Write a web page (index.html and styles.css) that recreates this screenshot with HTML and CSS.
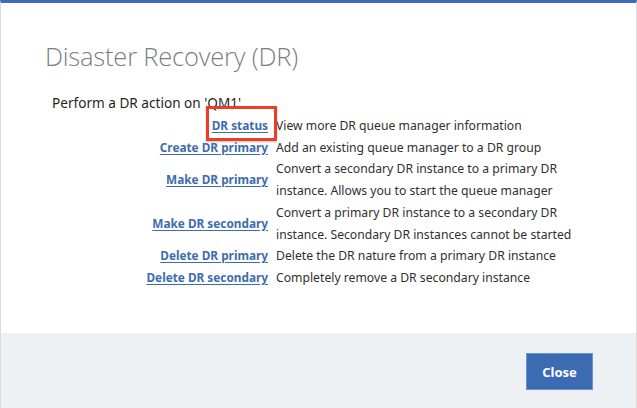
FILE: index.html
```html
<!DOCTYPE html>
<html lang="en">
<head>
<meta charset="utf-8">
<title>Disaster Recovery (DR)</title>
<link rel="stylesheet" href="styles.css">
</head>
<body>
<div class="modal">
  <div class="modal-body">
    <h1 class="modal-title">Disaster Recovery (DR)</h1>
    <p class="intro">Perform a DR action on 'QM1'</p>
    <div class="actions">
      <div class="action-label"><a href="#" class="action-link highlighted">DR status</a></div>
      <div class="action-desc">View more DR queue manager information</div>

      <div class="action-label"><a href="#" class="action-link">Create DR primary</a></div>
      <div class="action-desc">Add an existing queue manager to a DR group</div>

      <div class="action-label"><a href="#" class="action-link">Make DR primary</a></div>
      <div class="action-desc">Convert a secondary DR instance to a primary DR<br>instance. Allows you to start the queue manager</div>

      <div class="action-label"><a href="#" class="action-link">Make DR secondary</a></div>
      <div class="action-desc">Convert a primary DR instance to a secondary DR<br>instance. Secondary DR instances cannot be started</div>

      <div class="action-label"><a href="#" class="action-link">Delete DR primary</a></div>
      <div class="action-desc">Delete the DR nature from a primary DR instance</div>

      <div class="action-label"><a href="#" class="action-link">Delete DR secondary</a></div>
      <div class="action-desc">Completely remove a DR secondary instance</div>
    </div>
  </div>
  <div class="modal-footer">
    <button class="btn-primary" type="button">Close</button>
  </div>
</div>
</body>
</html>
```

FILE: styles.css
```css
html, body {
  margin: 0;
  padding: 0;
  height: 100%;
  background: #ffffff;
}

body {
  font-family: "Noto Sans", "Open Sans", sans-serif;
  color: #2b2b2b;
}

.modal {
  box-sizing: border-box;
  height: 408px;
  display: flex;
  flex-direction: column;
  border-top: 3px solid #3c6db4;
  border-left: 1px solid #dcdcdc;
  border-right: 1px solid #dcdcdc;
}

.modal-body {
  flex: 1;
  padding: 37px 0 0 44px;
}

.modal-title {
  margin: 0;
  font-family: "Open Sans", sans-serif;
  font-weight: 300;
  font-size: 25.5px;
  line-height: 32px;
  color: #7a7f85;
  letter-spacing: -0.2px;
}

.intro {
  margin: 21px 0 0 7px;
  font-size: 13.6px;
  line-height: 20px;
  color: #1f1f1f;
}

.actions {
  display: grid;
  grid-template-columns: 223px auto;
  justify-content: start;
  column-gap: 8px;
  margin-top: 2px;
  font-size: 12.2px;
  line-height: 21.7px;
}

.action-label {
  display: flex;
  align-items: center;
  justify-content: flex-end;
  white-space: nowrap;
}

.action-link {
  position: relative;
  color: #3d6cb0;
  font-weight: 700;
  font-size: 11.8px;
  text-decoration: underline;
  text-underline-offset: 2px;
}

.highlighted::after {
  content: "";
  position: absolute;
  left: -6px;
  right: -9px;
  top: -9px;
  bottom: -4px;
  border: 3px solid #ec3d26;
  box-shadow: 0 1px 2px rgba(0, 0, 0, 0.25);
}

.action-desc {
  color: #303030;
  white-space: nowrap;
}

.modal-footer {
  height: 75px;
  flex: none;
  background: #eef1f4;
  display: flex;
  justify-content: flex-end;
  align-items: center;
  padding-right: 43px;
}

.btn-primary {
  width: 67px;
  height: 37px;
  background: #3b6cb3;
  border: 1px solid #6d94cc;
  color: #ffffff;
  font-family: "Noto Sans", sans-serif;
  font-weight: 700;
  font-size: 13px;
  padding: 0;
  margin-top: 2px;
}
```
